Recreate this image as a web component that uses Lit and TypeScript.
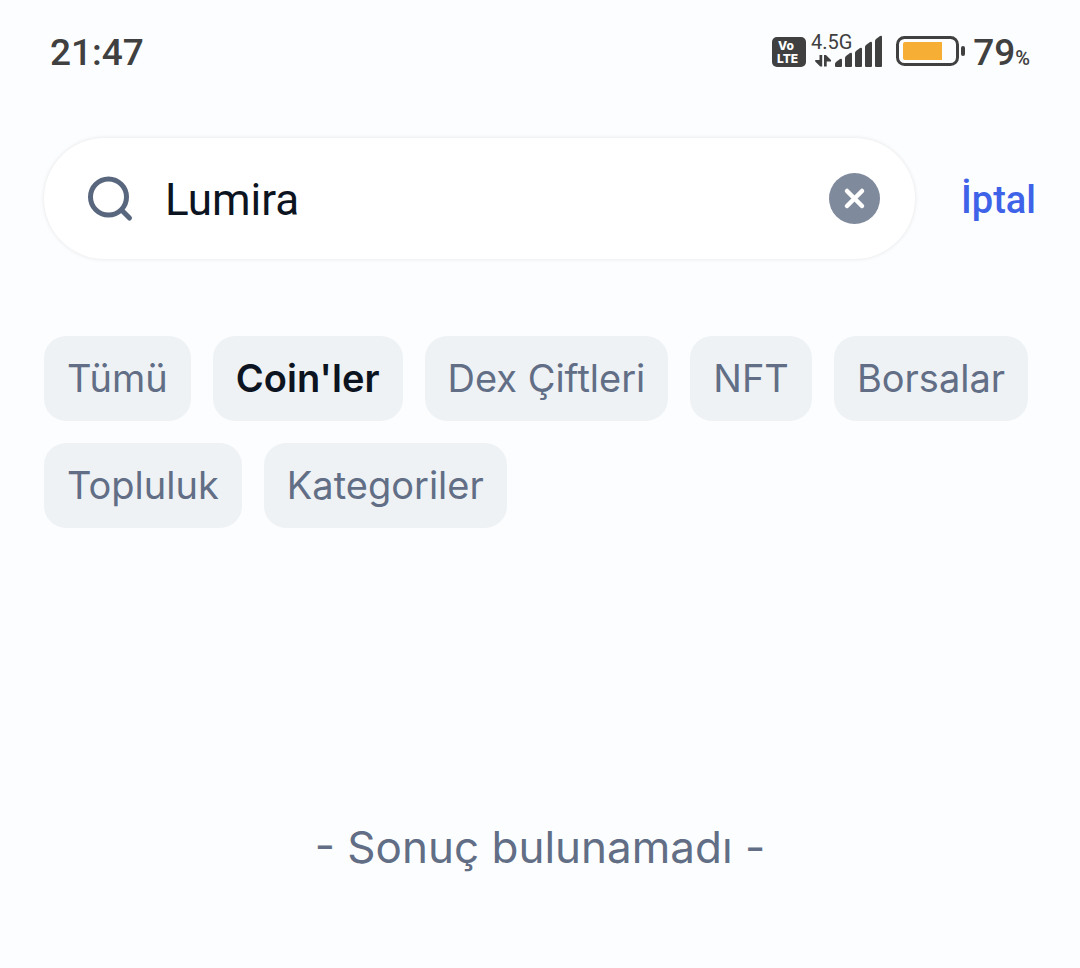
import { LitElement, html, css, svg } from "lit";
import { customElement, state } from "lit/decorators.js";

const CATEGORIES = ["Tümü", "Coin'ler", "Dex Çiftleri", "NFT", "Borsalar", "Topluluk", "Kategoriler"];
const BARS = [8, 14, 19, 25, 31];

@customElement("status-bar")
class StatusBar extends LitElement {
  static styles = css`
    :host {
      display: flex;
      align-items: center;
      justify-content: space-between;
      height: 60px;
      padding: 23px 50px 0;
      color: #404040;
      font-family: Roboto, sans-serif;
      font-weight: 500;
      font-size: 37px;
      line-height: 60px;
    }
    .icons { display: flex; align-items: center; }
    svg { display: block; overflow: visible; }
    .percent { font-size: 20px; line-height: 20px; }
    .charge { margin-left: 8px; white-space: nowrap; }
  `;

  render() {
    return html`
      <time>21:47</time>
      <div class="icons">
        <svg width="193" height="36" viewBox="772 35 193 36" fill="#404040" aria-hidden="true">
          <rect x="772" y="37" width="34" height="30" rx="5" />
          <g fill="#fff" font-family="Inter, sans-serif" font-size="12" font-weight="800">
            <text x="778" y="50">Vo</text>
            <text x="777" y="63">LTE</text>
          </g>
          <text x="811" y="49" font-size="20" font-weight="400">4.5G</text>
          <path d="M819.500 55h2.700v11.500h-2l-5-5v-1.500h4.300zM824 66.500v-11.500h2l5 5v1.500h-4.300v5z" />
          ${BARS.map((h, i) => {
            const x = 835 + i * 10;
            return svg`<path d="M${x} ${67 - h + 5}q0-1 1-2l4-3q2-1 2 1v${h - 2}q0 1-1 1h-5q-1 0-1-1z" />`;
          })}
          <rect x="897.5" y="37.5" width="60" height="27" rx="7" fill="none" stroke="#404040" stroke-width="3" />
          <path d="M905 42h37v18h-37q-2 0-2-2v-14q0-2 2-2z" fill="#f6ae35" />
          <rect x="961" y="46" width="4" height="10" rx="2" />
        </svg>
        <span class="charge">79<span class="percent">%</span></span>
      </div>
    `;
  }
}

@customElement("app-root")
class AppRoot extends LitElement {
  @state() private query = "Lumira";
  @state() private selected = 1;

  static styles = css`
    :host {
      display: block;
      min-height: 100vh;
      background: #fcfdfe;
      color: #616e85;
      font-family: Inter, sans-serif;
    }
    button { font: inherit; border: 0; cursor: pointer; }
    .search {
      display: flex;
      align-items: center;
      gap: 46px;
      padding: 55px 44px 0;
    }
    .field {
      flex: 1;
      min-width: 0;
      display: flex;
      align-items: center;
      height: 121px;
      box-sizing: border-box;
      padding: 0 35px 0 42px;
      border-radius: 61px;
      background: #fff;
      box-shadow: 0 0 4px rgb(0 0 0 / 0.1);
    }
    input {
      flex: 1;
      min-width: 0;
      margin-left: 31px;
      padding: 2px 0 0;
      border: 0;
      outline: 0;
      background: none;
      color: #0d1421;
      font: 400 44px/60px Roboto, sans-serif;
    }
    .clear { padding: 0; background: none; }
    svg { display: block; }
    .cancel {
      padding: 2px 0 0;
      background: none;
      color: #3e62e8;
      font: 500 38px/48px Roboto, sans-serif;
    }
    .chips {
      display: flex;
      flex-wrap: wrap;
      gap: 22px;
      padding: 77px 44px 0;
    }
    .chip {
      height: 85px;
      padding: 0 23px;
      border-radius: 22px;
      background: #eff2f5;
      color: #616e85;
      font-size: 38px;
      line-height: 85px;
      white-space: nowrap;
    }
    .chip.active { color: #0d1421; font-weight: 600; }
    .empty {
      margin: 289px 44px 0;
      text-align: center;
      font-size: 44px;
      line-height: 60px;
    }
  `;

  render() {
    return html`
      <status-bar></status-bar>
      <form class="search" role="search" @submit=${(e: Event) => e.preventDefault()}>
        <div class="field">
          <svg width="48" height="48" viewBox="0 0 48 48" fill="none" stroke="#58667e" stroke-width="5" stroke-linecap="round" aria-hidden="true">
            <circle cx="22.5" cy="22" r="18" />
            <path d="M36 35.500l7.500 7.500" />
          </svg>
          <input type="text" aria-label="Ara" .value=${this.query}
            @input=${(e: Event) => { this.query = (e.target as HTMLInputElement).value; }} />
          <button class="clear" type="button" aria-label="Temizle" @click=${() => { this.query = ""; }}>
            <svg width="51" height="51" viewBox="0 0 51 51" aria-hidden="true">
              <circle cx="25.5" cy="25.5" r="25.5" fill="#808a9d" />
              <path d="M18 18l15 15M33 18l-15 15" stroke="#fff" stroke-width="4.5" stroke-linecap="round" />
            </svg>
          </button>
        </div>
        <button class="cancel" type="button">İptal</button>
      </form>
      <nav class="chips">
        ${CATEGORIES.map((name, i) => html`
          <button type="button" class="chip ${i === this.selected ? "active" : ""}"
            aria-pressed=${i === this.selected ? "true" : "false"}
            @click=${() => { this.selected = i; }}>${name}</button>`)}
      </nav>
      <p class="empty">- Sonuç bulunamadı -</p>
    `;
  }
}
